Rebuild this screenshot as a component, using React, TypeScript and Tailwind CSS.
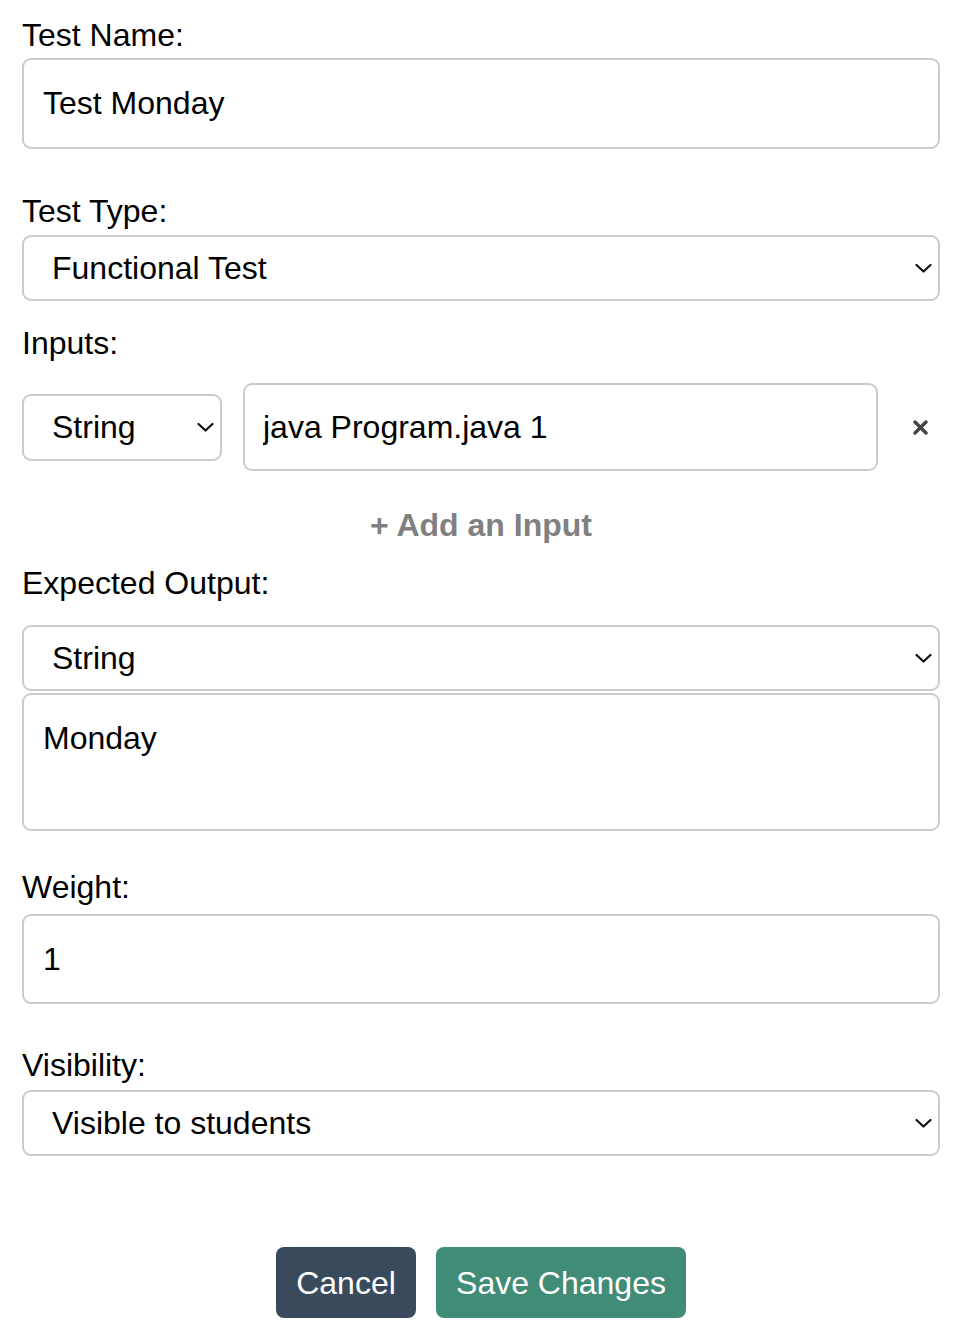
import React from "react";

function Chevron() {
  return (
    <svg
      className="pointer-events-none absolute right-[8px] top-1/2 -translate-y-1/2"
      width="17"
      height="10"
      viewBox="0 0 17 10"
      fill="none"
    >
      <path d="M1.5 2 L8.5 8.5 L15.5 2" stroke="#111" strokeWidth="2.2" strokeLinecap="round" strokeLinejoin="round" />
    </svg>
  );
}

function Select({ value, options, className }: { value: string; options: string[]; className: string }) {
  return (
    <div className={"relative " + className}>
      <select
        defaultValue={value}
        className="h-full w-full appearance-none rounded-[9px] border-2 border-[#cbcbcb] bg-white pl-[28px] pr-[40px] text-[32px] leading-[36px] text-black outline-none"
      >
        {options.map((o) => (
          <option key={o} value={o}>
            {o}
          </option>
        ))}
      </select>
      <Chevron />
    </div>
  );
}

function Label({ children, className }: { children: React.ReactNode; className: string }) {
  return <div className={"text-[32px] leading-[36px] text-black " + className}>{children}</div>;
}

export default function App() {
  return (
    <div className="min-h-[1324px] bg-white pl-[22px] pr-[20px] pt-[17px] font-['Liberation_Sans',Arial,Helvetica,sans-serif] text-black">
      <Label className="">Test Name:</Label>
      <input
        defaultValue="Test Monday"
        className="mt-[5px] block h-[91px] w-full rounded-[9px] border-2 border-[#cbcbcb] bg-white px-[19px] text-[32px] leading-[36px] text-black outline-none"
      />

      <Label className="mt-[44px]">Test Type:</Label>
      <Select value="Functional Test" options={["Functional Test", "Unit Test"]} className="mt-[6px] h-[66px] w-full" />

      <Label className="mt-[24px]">Inputs:</Label>
      <div className="mt-[22px] flex h-[88px] items-center">
        <Select value="String" options={["String", "Integer"]} className="h-[67px] w-[200px] shrink-0" />
        <input
          defaultValue="java Program.java 1"
          className="ml-[21px] h-[88px] min-w-0 flex-1 rounded-[9px] border-2 border-[#cbcbcb] bg-white px-[18px] text-[32px] leading-[36px] text-black outline-none"
        />
        <div className="ml-[22px] flex w-[40px] shrink-0 items-center justify-center">
          <svg width="15" height="15" viewBox="0 0 15 15">
            <path d="M2 2 L13 13 M13 2 L2 13" stroke="#444" strokeWidth="3.4" strokeLinecap="round" />
          </svg>
        </div>
      </div>

      <div className="mt-[36px] text-center text-[32px] font-bold leading-[36px] text-[#808080]">+ Add an Input</div>

      <Label className="mt-[22px]">Expected Output:</Label>
      <Select value="String" options={["String", "Integer"]} className="mt-[24px] h-[66px] w-full" />
      <textarea
        defaultValue="Monday"
        className="mt-[2px] block h-[138px] w-full resize-none rounded-[9px] border-2 border-[#cbcbcb] bg-white px-[19px] pt-[25px] text-[32px] leading-[36px] text-black outline-none"
      />

      <Label className="mt-[38px]">Weight:</Label>
      <input
        defaultValue="1"
        className="mt-[9px] block h-[90px] w-full rounded-[9px] border-2 border-[#cbcbcb] bg-white px-[19px] text-[32px] leading-[36px] text-black outline-none"
      />

      <Label className="mt-[43px]">Visibility:</Label>
      <Select value="Visible to students" options={["Visible to students", "Hidden"]} className="mt-[7px] h-[66px] w-full" />

      <div className="mt-[91px] flex justify-center gap-[20px]">
        <button className="h-[71px] w-[140px] rounded-[8px] bg-[#394a5d] text-[32px] leading-[36px] text-white">Cancel</button>
        <button className="h-[71px] w-[250px] rounded-[8px] bg-[#418c76] text-[32px] leading-[36px] text-white">Save Changes</button>
      </div>
    </div>
  );
}
